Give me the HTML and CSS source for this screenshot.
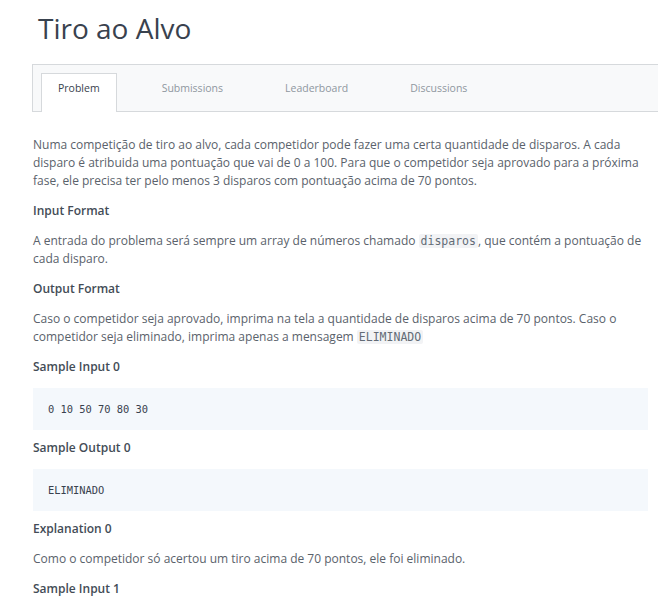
FILE: index.html
```html
<!DOCTYPE html>
<html lang="pt">
<head>
<meta charset="utf-8">
<title>Tiro ao Alvo</title>
<link rel="stylesheet" href="styles.css">
</head>
<body>
<div class="page">
  <h1 class="title">Tiro ao Alvo</h1>
  <nav class="tabs">
    <a class="tab active">Problem</a>
    <a class="tab">Submissions</a>
    <a class="tab">Leaderboard</a>
    <a class="tab">Discussions</a>
  </nav>
  <div class="content">
    <p class="para">Numa competição de tiro ao alvo, cada competidor pode fazer uma certa quantidade de disparos. A cada disparo é atribuida uma pontuação que vai de 0 a 100. Para que o competidor seja aprovado para a próxima fase, ele precisa ter pelo menos 3 disparos com pontuação acima de 70 pontos.</p>
    <h3 class="heading">Input Format</h3>
    <p class="para">A entrada do problema será sempre um array de números chamado <code class="inline">disparos</code>, que contém a pontuação de cada disparo.</p>
    <h3 class="heading">Output Format</h3>
    <p class="para">Caso o competidor seja aprovado, imprima na tela a quantidade de disparos acima de 70 pontos. Caso o competidor seja eliminado, imprima apenas a mensagem <code class="inline">ELIMINADO</code></p>
    <h3 class="heading">Sample Input 0</h3>
    <pre class="codeblock">0 10 50 70 80 30</pre>
    <h3 class="heading">Sample Output 0</h3>
    <pre class="codeblock">ELIMINADO</pre>
    <h3 class="heading">Explanation 0</h3>
    <p class="para">Como o competidor só acertou um tiro acima de 70 pontos, ele foi eliminado.</p>
    <h3 class="heading">Sample Input 1</h3>
  </div>
</div>
</body>
</html>
```
FILE: styles.css
```css
html, body {
  margin: 0;
  padding: 0;
  overflow: hidden;
  background: #ffffff;
}
body {
  font-family: "Open Sans", "Liberation Sans", sans-serif;
  color: #5a626b;
}
.page {
  padding: 0 10px 0 33px;
}
.title {
  margin: 0;
  padding: 8px 0 0 5px;
  font-size: 28px;
  line-height: 40px;
  font-weight: 400;
  color: #39424e;
}
.tabs {
  margin: 16px -40px 0 -1px;
  padding: 8px 8px 0;
  display: flex;
  gap: 28px;
  background: #f8f9fa;
  border: 1px solid #d6d9dc;
  border-right: none;
  height: 38px;
}
.tab {
  box-sizing: border-box;
  height: 39px;
  padding: 7px 16px 0;
  font-size: 10.5px;
  line-height: 14px;
  color: #8f979f;
  border: 1px solid transparent;
  border-bottom: none;
}
.tab.active {
  background: #ffffff;
  border-color: #d6d9dc;
  color: #39424e;
}
.content {
  padding-top: 24px;
}
.para {
  margin: 0 0 12px;
  font-size: 12px;
  line-height: 18px;
}
.heading {
  margin: 0 0 12px;
  font-size: 12px;
  line-height: 18px;
  font-weight: 600;
  color: #434c56;
}
.inline {
  font-family: "DejaVu Sans Mono", monospace;
  font-size: 11.5px;
  line-height: 14px;
  background: #f2f3f5;
  color: #626b75;
  padding: 0 2px;
  border-radius: 2px;
}
.codeblock {
  margin: 0 0 9px;
  height: 42px;
  box-sizing: border-box;
  padding: 0 15px;
  display: flex;
  align-items: center;
  font-family: "DejaVu Sans Mono", monospace;
  font-size: 10.4px;
  color: #39424e;
  background: #f4f8fc;
}
```
